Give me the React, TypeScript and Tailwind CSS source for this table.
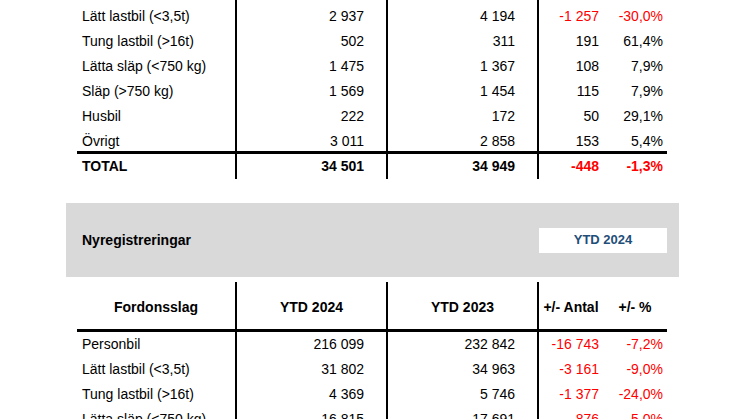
import React from "react";

type Row = { label: string; a: string; b: string; diff: string; pct: string; neg?: boolean };

const topRows: Row[] = [
  { label: "Lätt lastbil (<3,5t)", a: "2 937", b: "4 194", diff: "-1 257", pct: "-30,0%", neg: true },
  { label: "Tung lastbil (>16t)", a: "502", b: "311", diff: "191", pct: "61,4%" },
  { label: "Lätta släp (<750 kg)", a: "1 475", b: "1 367", diff: "108", pct: "7,9%" },
  { label: "Släp (>750 kg)", a: "1 569", b: "1 454", diff: "115", pct: "7,9%" },
  { label: "Husbil", a: "222", b: "172", diff: "50", pct: "29,1%" },
  { label: "Övrigt", a: "3 011", b: "2 858", diff: "153", pct: "5,4%" },
];

const ytdRows: Row[] = [
  { label: "Personbil", a: "216 099", b: "232 842", diff: "-16 743", pct: "-7,2%", neg: true },
  { label: "Lätt lastbil (<3,5t)", a: "31 802", b: "34 963", diff: "-3 161", pct: "-9,0%", neg: true },
  { label: "Tung lastbil (>16t)", a: "4 369", b: "5 746", diff: "-1 377", pct: "-24,0%", neg: true },
  { label: "Lätta släp (<750 kg)", a: "16 815", b: "17 691", diff: "-876", pct: "-5,0%", neg: true },
];

const grid = "grid grid-cols-[160px_151px_151px_64px_64px]";

function DataRow({ row, h = "h-[25px]", bold = false }: { row: Row; h?: string; bold?: boolean }) {
  const weight = bold ? "font-bold" : "";
  const tone = row.neg ? "text-[#ff0000]" : "text-black";
  return (
    <div className={`${grid} ${h} ${weight}`}>
      <div className="border-r-2 border-black pl-[5px] leading-[25px]">{row.label}</div>
      <div className="border-r-2 border-black pr-[22px] text-right leading-[25px]">{row.a}</div>
      <div className="border-r-2 border-black pr-[22px] text-right leading-[25px]">{row.b}</div>
      <div className={`pr-[4px] text-right leading-[25px] ${tone}`}>{row.diff}</div>
      <div className={`pr-[4px] text-right leading-[25px] ${tone}`}>{row.pct}</div>
    </div>
  );
}

export default function App() {
  return (
    <div className="w-[746px] h-[419px] overflow-hidden bg-white text-black text-[14px] font-['Liberation_Sans',Arial,sans-serif]">
      {/* tail of the previous month table */}
      <div className="ml-[77px] w-[590px]">
        <div className={`${grid} h-[3.5px]`}>
          <div className="border-r-2 border-black" />
          <div className="border-r-2 border-black" />
          <div className="border-r-2 border-black" />
          <div />
          <div />
        </div>
        {topRows.slice(0, 5).map((r) => (
          <DataRow key={r.label} row={r} />
        ))}
        <DataRow row={topRows[5]} h="h-[22.5px]" />
        <div className="border-t-[3px] border-black">
          <DataRow
            row={{ label: "TOTAL", a: "34 501", b: "34 949", diff: "-448", pct: "-1,3%", neg: true }}
            h="h-[24px]"
            bold
          />
        </div>
      </div>

      {/* section band */}
      <div className="mt-[25px] ml-[66px] w-[613px] h-[74px] bg-[#d9d9d9] flex items-center justify-between pl-[16px] pr-[12px]">
        <span className="font-bold">Nyregistreringar</span>
        <div className="w-[128px] h-[25px] bg-white flex items-center justify-center text-[13px] font-bold text-[#1f4e79]">
          YTD 2024
        </div>
      </div>

      {/* YTD table */}
      <div className="mt-[5px] ml-[77px] w-[590px]">
        <div className={`${grid} h-[50px] border-b-[3px] border-black font-bold`}>
          <div className="border-r-2 border-black flex items-center justify-center pt-[4px]">Fordonsslag</div>
          <div className="border-r-2 border-black flex items-center justify-center pt-[4px]">YTD 2024</div>
          <div className="border-r-2 border-black flex items-center justify-center pt-[4px]">YTD 2023</div>
          <div className="flex items-center justify-center pt-[4px]">+/- Antal</div>
          <div className="flex items-center justify-center pt-[4px]">+/- %</div>
        </div>
        {ytdRows.map((r) => (
          <DataRow key={r.label} row={r} />
        ))}
      </div>
    </div>
  );
}
